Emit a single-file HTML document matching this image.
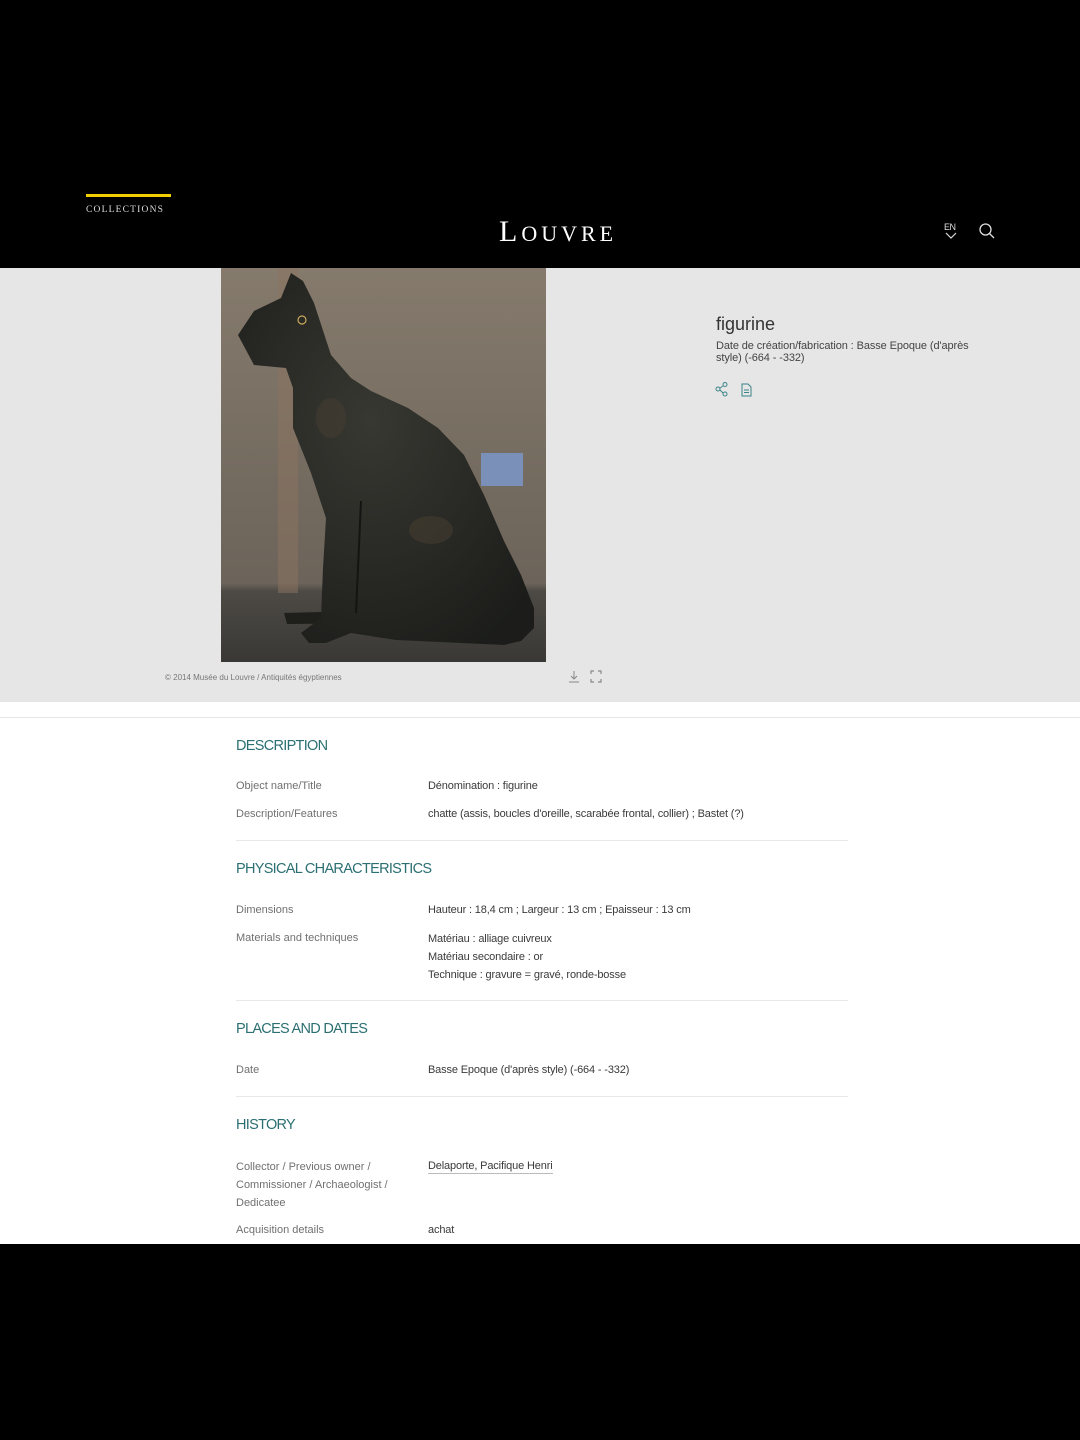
<!DOCTYPE html>
<html><head><meta charset="utf-8"><style>
*{margin:0;padding:0;box-sizing:border-box}
body{width:1080px;height:1440px;background:#000;position:relative;overflow:hidden;font-family:"Liberation Sans",sans-serif}
.a{position:absolute;white-space:nowrap}
.h{color:#2b6f72;font-size:14.5px;letter-spacing:-0.7px}
.l{color:#707070;font-size:11px}
.v{color:#3a3a3a;font-size:11px;letter-spacing:-0.15px}
.sep{position:absolute;left:236px;width:612px;height:1px;background:#e8e8e8}
</style></head><body>
<div class="a" style="left:86px;top:194px;width:85px;height:3px;background:#f2cd00"></div>
<div class="a" style="left:86px;top:205px;color:#ddd;font-family:'Liberation Serif',serif;font-size:9.5px;letter-spacing:1.2px">COLLECTIONS</div>
<div class="a" style="left:499px;top:215px;color:#fff;font-family:'Liberation Serif',serif;font-size:30px;letter-spacing:4px;line-height:34px">L<span style="font-size:22px">OUVRE</span></div>
<div class="a" style="left:944px;top:222px;color:#ddd;font-size:9px;letter-spacing:-0.5px">EN</div>
<svg class="a" style="left:944px;top:232px" width="14" height="8"><path d="M2 1 L7 6 L12 1" stroke="#ddd" fill="none" stroke-width="1.2"/></svg>
<svg class="a" style="left:978px;top:222px" width="18" height="18"><circle cx="7.5" cy="7.5" r="5.5" stroke="#ddd" fill="none" stroke-width="1.3"/><path d="M11.5 11.5 L16 16" stroke="#ddd" stroke-width="1.3"/></svg>

<div class="a" style="left:0;top:268px;width:1080px;height:434px;background:#e6e6e6"></div>
<div class="a" style="left:0;top:702px;width:1080px;height:542px;background:#fff"></div>
<div class="a" style="left:0;top:717px;width:1080px;height:1px;background:#e6e6e6"></div>

<svg class="a" style="left:221px;top:268px" width="325" height="394" viewBox="0 0 325 394">
<defs><linearGradient id="bg" x1="0" y1="0" x2="0" y2="1"><stop offset="0" stop-color="#857a6c"/><stop offset="0.8" stop-color="#6c645a"/><stop offset="0.82" stop-color="#4d4a45"/><stop offset="1" stop-color="#3a3835"/></linearGradient>
<radialGradient id="cg" cx="0.45" cy="0.4" r="0.7"><stop offset="0" stop-color="#383832"/><stop offset="1" stop-color="#1c1d1a"/></radialGradient></defs>
<rect width="325" height="394" fill="url(#bg)"/>
<rect x="57" y="0" width="20" height="325" fill="#8c7460" opacity="0.5"/>
<rect x="260" y="185" width="42" height="33" fill="#7a90b8"/>
<path d="M63 345 L175 342 L175 355 L66 356 Z" fill="#1e1e1b"/>
<path d="M70 5 L82 13 L93 35 L110 87 L130 110 L150 123 L187 140 L217 160 L243 187 L263 227 L283 273 L300 307 L313 340 L313 360 L300 373 L283 377 L175 372 L130 365 L105 375 L88 375 L80 365 L100 350 L102 300 L105 250 L90 205 L72 160 L72 120 L65 100 L33 97 L17 67 L33 43 L60 30 Z" fill="url(#cg)"/>
<path d="M140 233 L135 345" stroke="#141412" stroke-width="2"/>
<circle cx="81" cy="52" r="4" stroke="#c9a85a" stroke-width="1.2" fill="none"/>
<ellipse cx="210" cy="262" rx="22" ry="14" fill="#4a4032" opacity="0.5"/>
<ellipse cx="110" cy="150" rx="15" ry="20" fill="#4a4234" opacity="0.4"/>
</svg>

<div class="a" style="left:165px;top:673px;color:#777;font-size:8px">© 2014 Musée du Louvre / Antiquités égyptiennes</div>
<svg class="a" style="left:567px;top:670px" width="36" height="14"><path d="M7 1 V9 M4 6 L7 9 L10 6 M2 12 H12" stroke="#888" fill="none" stroke-width="1"/><path d="M24 4 V1 H27 M31 1 H34 V4 M34 9 V12 H31 M27 12 H24 V9" stroke="#888" fill="none" stroke-width="1.2"/></svg>

<div class="a" style="left:716px;top:314px;color:#333;font-size:18px">figurine</div>
<div class="a" style="left:716px;top:341px;color:#444;font-size:11px;line-height:11.5px;white-space:normal;width:270px;letter-spacing:-0.1px">Date de création/fabrication : Basse Epoque (d'après style) (-664 - -332)</div>
<svg class="a" style="left:714px;top:381px" width="40" height="18"><circle cx="4" cy="8" r="2" stroke="#3b8487" fill="none"/><circle cx="11" cy="3.5" r="2" stroke="#3b8487" fill="none"/><circle cx="11" cy="13" r="2" stroke="#3b8487" fill="none"/><path d="M6 7 L9 5 M6 9 L9 12" stroke="#3b8487"/><path d="M28 3 H34 L37 6 V15 H28 Z M30 9 H35 M30 11.5 H35" stroke="#3b8487" fill="none"/></svg>

<div class="a h" style="left:236px;top:738px">DESCRIPTION</div>
<div class="a l" style="left:236px;top:780px">Object name/Title</div><div class="a v" style="left:428px;top:780px">Dénomination : figurine</div>
<div class="a l" style="left:236px;top:808px">Description/Features</div><div class="a v" style="left:428px;top:808px">chatte (assis, boucles d'oreille, scarabée frontal, collier) ; Bastet (?)</div>
<div class="sep" style="top:840px"></div>

<div class="a h" style="left:236px;top:861px">PHYSICAL CHARACTERISTICS</div>
<div class="a l" style="left:236px;top:904px">Dimensions</div><div class="a v" style="left:428px;top:904px">Hauteur : 18,4 cm ; Largeur : 13 cm ; Epaisseur : 13 cm</div>
<div class="a l" style="left:236px;top:932px">Materials and techniques</div>
<div class="a v" style="left:428px;top:930px;line-height:18px">Matériau : alliage cuivreux<br>Matériau secondaire : or<br>Technique : gravure = gravé, ronde-bosse</div>
<div class="sep" style="top:1000px"></div>

<div class="a h" style="left:236px;top:1021px">PLACES AND DATES</div>
<div class="a l" style="left:236px;top:1064px">Date</div><div class="a v" style="left:428px;top:1064px">Basse Epoque (d'après style) (-664 - -332)</div>
<div class="sep" style="top:1096px"></div>

<div class="a h" style="left:236px;top:1117px">HISTORY</div>
<div class="a l" style="left:236px;top:1158px;line-height:18px">Collector / Previous owner /<br>Commissioner / Archaeologist /<br>Dedicatee</div>
<div class="a v" style="left:428px;top:1160px;border-bottom:1px solid #bbb;line-height:13px">Delaporte, Pacifique Henri</div>
<div class="a l" style="left:236px;top:1224px">Acquisition details</div><div class="a v" style="left:428px;top:1224px">achat</div>
<div class="a" style="left:0;top:1244px;width:1080px;height:196px;background:#000"></div>
</body></html>
